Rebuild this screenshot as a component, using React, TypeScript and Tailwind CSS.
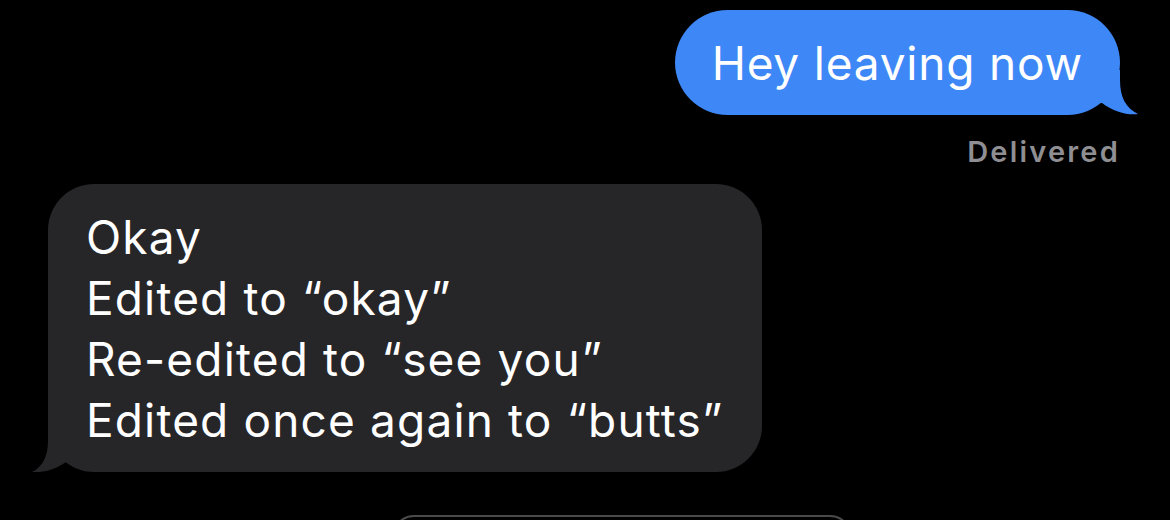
import React from "react";

export default function App() {
  return (
    <div
      className="w-[1170px] h-[520px] bg-black overflow-hidden flex flex-col"
      style={{ fontFamily: "Inter, 'Noto Sans', sans-serif" }}
    >
      <div className="flex justify-end pr-[50px] pt-[10px]">
        <div className="relative">
          <div className="h-[105px] rounded-full bg-[#3e87f6] pl-[37px] pr-[37px] flex items-center text-white text-[46px] leading-none tracking-[0.8px]">
            Hey leaving now
          </div>
          <svg
            className="absolute left-[calc(100%-30px)] top-[60px]"
            width="50"
            height="45"
            viewBox="0 0 50 45"
          >
            <path
              d="M30 0 L30 10 C30 28 36 38 48 44 C38 45.5 24 42 12 33 L0 33 L0 0 Z"
              fill="#3e87f6"
            />
          </svg>
        </div>
      </div>
      <div className="flex justify-end pr-[50px] mt-[22px]">
        <span className="text-[29px] leading-none font-semibold tracking-[2.2px] text-[#8e8e93]">Delivered</span>
      </div>
      <div className="flex pl-[48px] mt-[18px]">
        <div className="relative">
          <div className="rounded-[46px] bg-[#262629] pl-[38px] pr-[39px] pt-[23px] pb-[21px] text-white text-[46px] leading-[61px] tracking-[1.15px]">
            <div>Okay</div>
            <div>Edited to “okay”</div>
            <div>Re-edited to “see you”</div>
            <div>Edited once again to “butts”</div>
          </div>
          <svg
            className="absolute left-[-18px] bottom-0"
            width="50"
            height="45"
            viewBox="0 0 50 45"
          >
            <path
              d="M18 0 L18 14 C18 30 12 40 2 45 C14 46 26 42 36 35 L50 35 L50 0 Z"
              fill="#262629"
            />
          </svg>
        </div>
      </div>
      <div className="pl-[392px] mt-[43px]">
        <div className="w-[460px] h-[50px] rounded-[22px] border-2 border-[#4a4a4c]"></div>
      </div>
    </div>
  );
}
